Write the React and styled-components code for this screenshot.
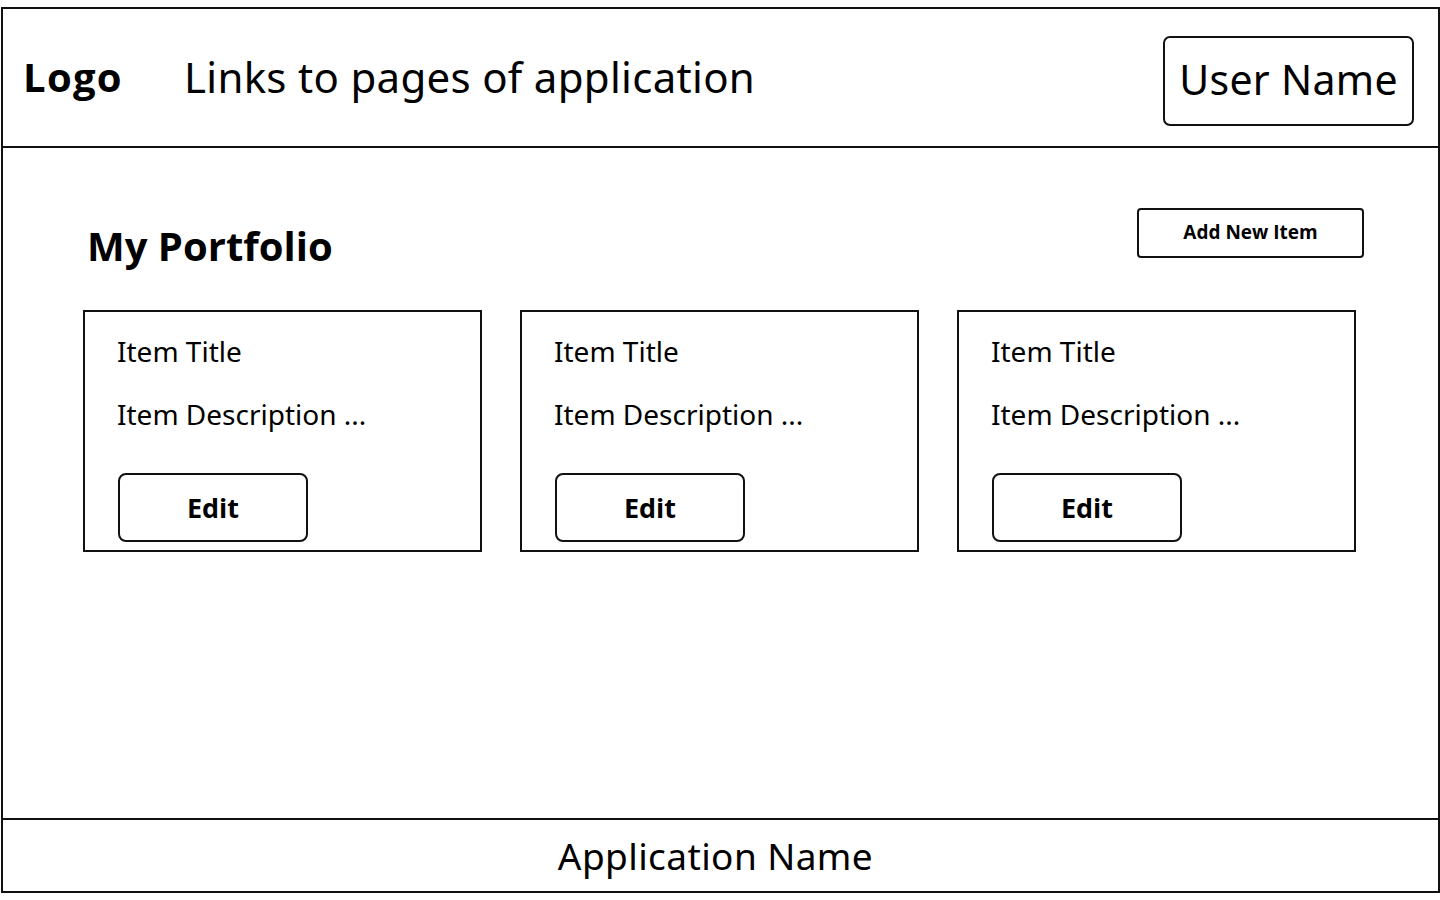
import React from 'react'
import styled, { createGlobalStyle } from 'styled-components'

const GlobalStyle = createGlobalStyle`
  html, body {
    margin: 0;
    padding: 0;
    background: #fff;
  }
  body {
    font-family: "Open Sans", "Noto Sans", sans-serif;
    color: #000;
  }
`

const Frame = styled.div`
  box-sizing: border-box;
  margin: 7px 0 0 1px;
  width: 1439px;
  height: 886px;
  border: 2px solid #111;
  display: flex;
  flex-direction: column;
`

const Header = styled.header`
  box-sizing: border-box;
  height: 139px;
  border-bottom: 2px solid #111;
  display: flex;
  align-items: center;
  padding: 0 24px 0 20px;
`

const Logo = styled.div`
  font-family: "Open Sans", sans-serif;
  font-weight: 700;
  font-size: 40px;
  letter-spacing: 1.3px;
  margin-top: -2px;
`

const NavLinks = styled.nav`
  font-family: "Noto Sans", sans-serif;
  font-weight: 400;
  font-size: 42px;
  letter-spacing: 0.3px;
  margin-left: 61px;
  margin-top: -2px;
  flex: 1;
`

const UserButton = styled.div`
  box-sizing: border-box;
  width: 251px;
  height: 90px;
  border: 2px solid #111;
  border-radius: 7px;
  display: flex;
  align-items: center;
  justify-content: center;
  font-family: "Noto Sans", sans-serif;
  font-size: 41px;
  letter-spacing: 0.3px;
  margin-top: 6px;
  padding-bottom: 4px;
`

const Main = styled.main`
  flex: 1;
  padding: 60px 75px 0 80px;
`

const TitleRow = styled.div`
  display: flex;
  justify-content: space-between;
  align-items: flex-start;
`

const PageTitle = styled.h1`
  margin: 16px 0 0 4px;
  font-family: "Open Sans", sans-serif;
  font-weight: 700;
  font-size: 40px;
  line-height: 1.1;
`

const AddButton = styled.button`
  box-sizing: border-box;
  width: 227px;
  height: 50px;
  border: 2px solid #111;
  border-radius: 4px;
  background: #fff;
  font-family: "Open Sans", sans-serif;
  font-weight: 700;
  font-size: 19px;
  color: #000;
  margin-right: -1px;
  padding-bottom: 3px;
`

const CardGrid = styled.div`
  display: grid;
  grid-template-columns: repeat(3, 399px);
  column-gap: 38px;
  margin-top: 42px;
`

const Card = styled.div`
  box-sizing: border-box;
  height: 242px;
  border: 2px solid #111;
  padding: 20px 0 0 32px;
  display: flex;
  flex-direction: column;
  align-items: flex-start;
`

const CardText = styled.div`
  font-family: "Noto Sans", sans-serif;
  font-size: 28px;
  line-height: 38px;
  margin-bottom: ${p => p.gap}px;
`

const EditButton = styled.button`
  box-sizing: border-box;
  width: 190px;
  height: 69px;
  border: 2px solid #111;
  border-radius: 8px;
  background: #fff;
  font-family: "Open Sans", sans-serif;
  font-weight: 700;
  font-size: 27px;
  color: #000;
  margin-left: 1px;
`

const Footer = styled.footer`
  box-sizing: border-box;
  height: 73px;
  border-top: 2px solid #111;
  display: flex;
  align-items: center;
  justify-content: center;
  font-family: "Noto Sans", sans-serif;
  font-size: 37px;
  letter-spacing: 0.4px;
  padding-right: 10px;
`

const items = [1, 2, 3]

const App = () => (
  <>
    <GlobalStyle />
    <Frame>
      <Header>
        <Logo>Logo</Logo>
        <NavLinks>Links to pages of application</NavLinks>
        <UserButton>User Name</UserButton>
      </Header>
      <Main>
        <TitleRow>
          <PageTitle>My Portfolio</PageTitle>
          <AddButton>Add New Item</AddButton>
        </TitleRow>
        <CardGrid>
          {items.map(i => (
            <Card key={i}>
              <CardText gap={25}>Item Title</CardText>
              <CardText gap={40}>Item Description ...</CardText>
              <EditButton>Edit</EditButton>
            </Card>
          ))}
        </CardGrid>
      </Main>
      <Footer>Application Name</Footer>
    </Frame>
  </>
)

export default App
